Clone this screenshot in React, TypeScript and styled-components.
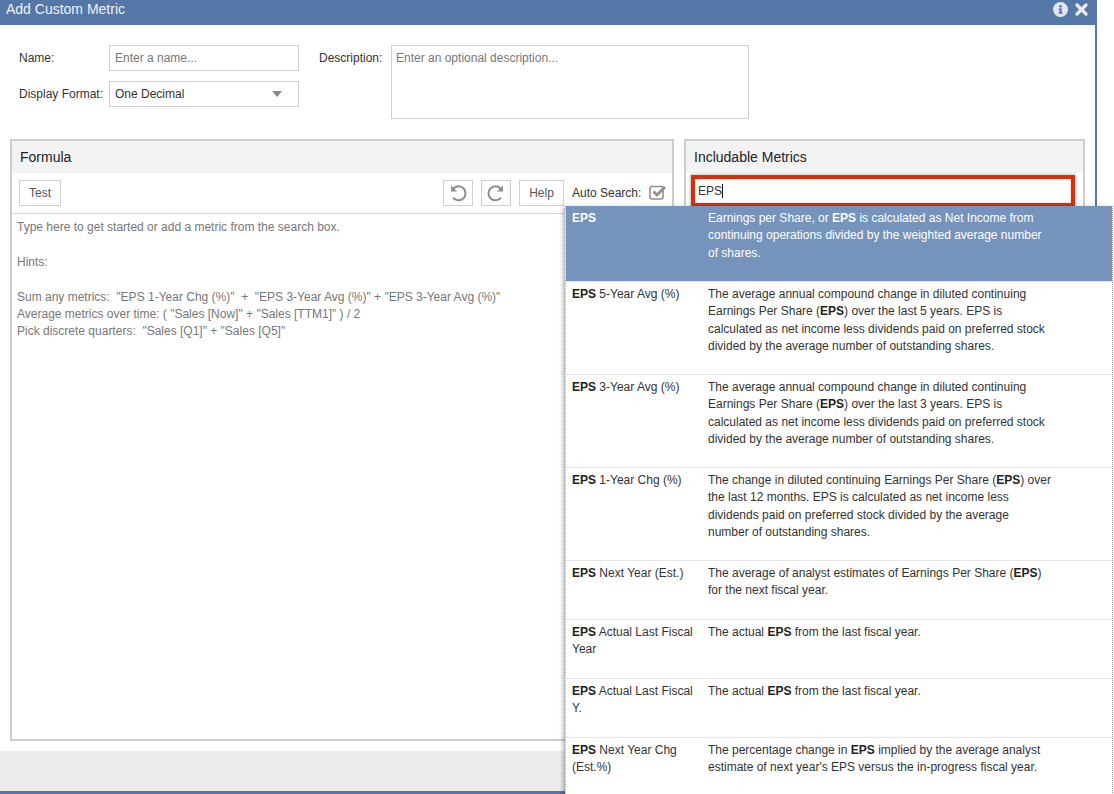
import React from "react";
import styled, { createGlobalStyle } from "styled-components";

const Global = createGlobalStyle`
  html, body { margin: 0; padding: 0; background: #fff; overflow: hidden; }
  body { font-family: "Liberation Sans", Arial, sans-serif; font-size: 12px; color: #333; }
  * { box-sizing: border-box; }
`;

const Page = styled.div`
  position: relative;
  width: 1114px;
  height: 794px;
  overflow: hidden;
  background: #fff;
`;
const Dialog = styled.div`
  width: 1097px;
  height: 794px;
  display: flex;
  flex-direction: column;
  border-right: 2px solid #5577a8;
  border-bottom: 3px solid #5577a8;
`;
const TitleBar = styled.header`
  height: 25px;
  flex: none;
  margin-right: -2px;
  background: #5577a8;
  color: #fff;
  display: flex;
  align-items: flex-start;
  justify-content: space-between;
  padding: 1px 9px 0 6px;
`;
const Title = styled.h1`
  margin: 0;
  font-size: 14px;
  font-weight: 400;
  line-height: 16px;
  color: #eef2f7;
`;
const TitleIcons = styled.div`
  display: flex;
  gap: 7px;
  align-items: center;
  height: 17px;
`;
const Form = styled.div`
  height: 114px;
  flex: none;
  padding: 20px 0 0 19px;
  display: flex;
`;
const FormLeft = styled.div`
  width: 280px;
  display: grid;
  grid-template-columns: 90px 190px;
  grid-auto-rows: 26px;
  row-gap: 10px;
  align-items: center;
`;
const Label = styled.label`
  color: #333;
  font-size: 12px;
`;
const Field = styled.div<{ $muted?: boolean }>`
  height: 26px;
  border: 1px solid #d0d0d0;
  padding: 0 5px;
  display: flex;
  align-items: center;
  justify-content: space-between;
  color: ${(p) => (p.$muted ? "#777" : "#333")};
`;
const Caret = styled.span`
  width: 0;
  height: 0;
  margin-right: 11px;
  border-left: 5.5px solid transparent;
  border-right: 5.5px solid transparent;
  border-top: 6px solid #8a8a8a;
`;
const DescLabel = styled(Label)`
  margin-left: 20px;
  width: 72px;
  padding-top: 6px;
`;
const DescBox = styled.div`
  width: 358px;
  height: 74px;
  border: 1px solid #d0d0d0;
  padding: 5px 4px;
  color: #777;
`;
const Panels = styled.div`
  flex: 1;
  display: flex;
  gap: 10px;
  padding: 0 0 0 10px;
  min-height: 0;
  height: 602px;
`;
const Panel = styled.section<{ $w: number }>`
  width: ${(p) => p.$w}px;
  height: 602px;
  border: 2px solid #cdcdcd;
  display: flex;
  flex-direction: column;
`;
const PanelHead = styled.h2`
  margin: 0;
  height: 32px;
  flex: none;
  background: #f3f3f3;
  font-size: 14px;
  font-weight: 400;
  line-height: 32px;
  padding-left: 8px;
  color: #222;
`;
const Toolbar = styled.div`
  height: 41px;
  flex: none;
  border-bottom: 1px solid #d5d5d5;
  display: flex;
  align-items: flex-start;
  padding: 7px 0 0 7px;
`;
const Btn = styled.button<{ $left?: number }>`
  height: 26px;
  padding: 0 8px;
  margin-left: ${(p) => p.$left ?? 0}px;
  background: #fff;
  border: 1px solid #d0d0d0;
  font: 12px "Liberation Sans", Arial, sans-serif;
  color: #555;
  display: flex;
  align-items: center;
  justify-content: center;
`;
const IconBtn = styled(Btn)`
  width: 30px;
  padding: 0;
`;
const AutoLabel = styled.span`
  margin-left: 8px;
  margin-top: 6px;
  color: #333;
`;
const Check = styled.span`
  margin-left: 8px;
  margin-top: 5px;
  display: block;
  line-height: 0;
`;
const Hints = styled.div`
  flex: 1;
  padding: 5px 5px;
  color: #777;
  line-height: 17.4px;
  white-space: pre;
`;
const SearchWrap = styled.div`
  height: 40px;
  padding: 2px 0 0 5px;
  flex: none;
`;
const SearchBox = styled.div`
  width: 384px;
  height: 32px;
  border: 4px solid #d9300c;
  box-shadow: 0 0 3px rgba(0, 0, 0, 0.45), inset 0 0 2px rgba(0,0,0,.3);
  padding-left: 3px;
  display: flex;
  align-items: center;
  color: #333;
`;
const Cursor = styled.span`
  width: 1px;
  height: 14px;
  background: #111;
`;
const Dropdown = styled.div`
  position: absolute;
  left: 565px;
  top: 206px;
  width: 548px;
  background: #fff;
  border-left: 1px dotted #aaa;
  border-right: 1px dotted #999;
  box-shadow: -2px 1px 4px rgba(0, 0, 0, 0.3);
`;
const Row = styled.div<{ $h: number; $active?: boolean }>`
  height: ${(p) => p.$h}px;
  display: grid;
  grid-template-columns: 136px 344px;
  column-gap: 0;
  padding: 4px 0 0 6px;
  line-height: 17.3px;
  border-bottom: 1px solid #e6e6e6;
  background: ${(p) => (p.$active ? "#7593bb" : "#fff")};
  color: ${(p) => (p.$active ? "#fff" : "#333")};
  b { color: ${(p) => (p.$active ? "#fff" : "#222")}; }
`;
const Name = styled.div`
  padding-right: 0;
  width: 126px;
`;

const rows: { h: number; active?: boolean; name: React.ReactNode; text: React.ReactNode }[] = [
  { h: 76, active: true, name: <b>EPS</b>, text: <>Earnings per Share, or <b>EPS</b> is calculated as Net Income from<br />continuing operations divided by the weighted average number<br />of shares.</> },
  { h: 93, name: <><b>EPS</b> 5-Year Avg (%)</>, text: <>The average annual compound change in diluted continuing<br />Earnings Per Share (<b>EPS</b>) over the last 5 years. EPS is<br />calculated as net income less dividends paid on preferred stock<br />divided by the average number of outstanding shares.</> },
  { h: 93, name: <><b>EPS</b> 3-Year Avg (%)</>, text: <>The average annual compound change in diluted continuing<br />Earnings Per Share (<b>EPS</b>) over the last 3 years. EPS is<br />calculated as net income less dividends paid on preferred stock<br />divided by the average number of outstanding shares.</> },
  { h: 93, name: <><b>EPS</b> 1-Year Chg (%)</>, text: <>The change in diluted continuing Earnings Per Share (<b>EPS</b>) over<br />the last 12 months. EPS is calculated as net income less<br />dividends paid on preferred stock divided by the average<br />number of outstanding shares.</> },
  { h: 59, name: <><b>EPS</b> Next Year (Est.)</>, text: <>The average of analyst estimates of Earnings Per Share (<b>EPS</b>)<br />for the next fiscal year.</> },
  { h: 59, name: <><b>EPS</b> Actual Last Fiscal Year</>, text: <>The actual <b>EPS</b> from the last fiscal year.</> },
  { h: 59, name: <><b>EPS</b> Actual Last Fiscal Y.</>, text: <>The actual <b>EPS</b> from the last fiscal year.</> },
  { h: 59, name: <><b>EPS</b> Next Year Chg (Est.%)</>, text: <>The percentage change in <b>EPS</b> implied by the average analyst<br />estimate of next year's EPS versus the in-progress fiscal year.</> },
];

const hintText = `Type here to get started or add a metric from the search box.

Hints:

Sum any metrics:  "EPS 1-Year Chg (%)"  +  "EPS 3-Year Avg (%)" + "EPS 3-Year Avg (%)"
Average metrics over time: ( "Sales [Now]" + "Sales [TTM1]" ) / 2
Pick discrete quarters:  "Sales [Q1]" + "Sales [Q5]"`;

const Footer = styled.footer`
  height: 40px;
  flex: none;
  margin-top: 10px;
  background: #ebebeb;
`;

export default function App() {
  return (
    <Page>
      <Global />
      <Dialog>
        <TitleBar>
          <Title>Add Custom Metric</Title>
          <TitleIcons>
            <svg width="15" height="15" viewBox="0 0 16 16">
              <circle cx="8" cy="8" r="8" fill="#dfe6f0" />
              <rect x="6.9" y="7" width="2.4" height="5" fill="#5577a8" />
              <rect x="6" y="11.2" width="4.2" height="1.3" fill="#5577a8" />
              <rect x="6" y="7" width="3" height="1.2" fill="#5577a8" />
              <circle cx="8" cy="4.6" r="1.4" fill="#5577a8" />
            </svg>
            <svg width="13" height="13" viewBox="0 0 13 13">
              <path d="M2 2 L11 11 M11 2 L2 11" stroke="#e8edf4" strokeWidth="3.2" strokeLinecap="round" />
            </svg>
          </TitleIcons>
        </TitleBar>
        <Form>
          <FormLeft>
            <Label>Name:</Label>
            <Field $muted>Enter a name...</Field>
            <Label>Display Format:</Label>
            <Field>One Decimal<Caret /></Field>
          </FormLeft>
          <DescLabel>Description:</DescLabel>
          <DescBox>Enter an optional description...</DescBox>
        </Form>
        <Panels>
          <Panel $w={664}>
            <PanelHead>Formula</PanelHead>
            <Toolbar>
              <Btn style={{ width: 42 }}>Test</Btn>
              <IconBtn $left={382}>
                <svg width="20" height="20" viewBox="0 0 20 20" fill="none" stroke="#8e8e8e" strokeWidth="2">
                  <path d="M5.5 5.5 A7 7 0 1 1 5 14.6" />
                  <path d="M3 2.5 V8.5 H9" fill="#8e8e8e" stroke="none" />
                </svg>
              </IconBtn>
              <IconBtn $left={8}>
                <svg width="20" height="20" viewBox="0 0 20 20" fill="none" stroke="#8e8e8e" strokeWidth="2">
                  <path d="M14.5 5.5 A7 7 0 1 0 15 14.6" />
                  <path d="M17 2.5 V8.5 H11" fill="#8e8e8e" stroke="none" />
                </svg>
              </IconBtn>
              <Btn $left={8} style={{ width: 45 }}>Help</Btn>
              <AutoLabel>Auto Search:</AutoLabel>
              <Check>
                <svg width="18" height="15" viewBox="0 0 18 15" fill="none">
                  <rect x="1" y="1.5" width="13" height="12.5" rx="2" stroke="#8e8e8e" strokeWidth="1.6" />
                  <path d="M4.5 6.5 L8 10 L16 2" stroke="#8e8e8e" strokeWidth="2.8" />
                </svg>
              </Check>
            </Toolbar>
            <Hints>{hintText}</Hints>
          </Panel>
          <Panel $w={401}>
            <PanelHead>Includable Metrics</PanelHead>
            <SearchWrap>
              <SearchBox>EPS<Cursor /></SearchBox>
            </SearchWrap>
          </Panel>
        </Panels>
        <Footer />
      </Dialog>
      <Dropdown>
        {rows.map((r, i) => (
          <Row key={i} $h={r.h} $active={r.active}>
            <Name>{r.name}</Name>
            <div>{r.text}</div>
          </Row>
        ))}
      </Dropdown>
    </Page>
  );
}
